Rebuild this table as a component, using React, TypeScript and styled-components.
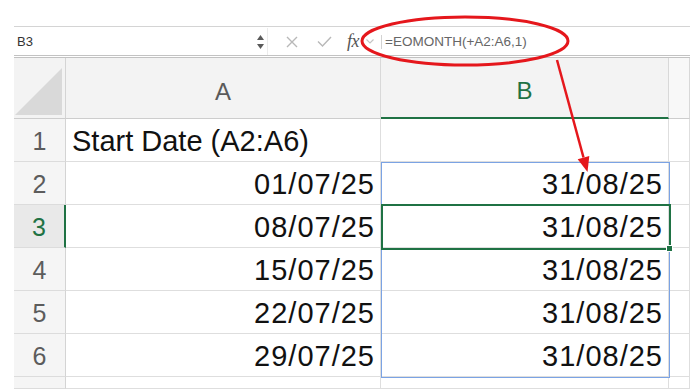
import styled, { createGlobalStyle, css } from "styled-components";

const GREEN = "#1f7244";
const GRID_LINE = "#dedede";

const GlobalStyle = createGlobalStyle`
  html, body {
    margin: 0;
    padding: 0;
    background: #fff;
  }
  body {
    font-family: "Liberation Sans", Arial, sans-serif;
  }
`;

type Placed = { $row: number; $col: number };

// every sheet part sits on an explicit track so the overlays never push cells around
const placed = css<Placed>`
  grid-row: ${(p) => p.$row};
  grid-column: ${(p) => p.$col};
`;

const Page = styled.div`
  position: relative;
  width: 690px;
  height: 389px;
  padding-top: 26px;
  box-sizing: border-box;
  overflow: hidden;
  display: flex;
  flex-direction: column;
`;

const FormulaBar = styled.div`
  margin-left: 14px;
  height: 32px;
  box-sizing: border-box;
  display: flex;
  align-items: center;
  padding-top: 1px;
  border-top: 1px solid #d4d4d4;
  border-bottom: 3px double #c2c2c2;
`;

const NameBox = styled.div`
  flex: 0 0 254px;
  height: 100%;
  box-sizing: border-box;
  display: flex;
  align-items: center;
  justify-content: space-between;
  padding: 0 3px 0 3px;
  border-right: 1px solid #ececec;
  font-size: 13px;
  color: #333;
`;

const Spinner = styled.div`
  display: flex;
  flex-direction: column;
  gap: 4px;
`;

const IconSlot = styled.div<{ $width?: number; $gap?: number }>`
  flex: 0 0 ${(p) => p.$width ?? 24}px;
  margin-left: ${(p) => p.$gap ?? 0}px;
  display: flex;
  align-items: center;
  justify-content: center;
`;

const FxLabel = styled.span`
  font-family: "Liberation Serif", "Times New Roman", serif;
  font-style: italic;
  font-size: 18px;
  color: #555;
  letter-spacing: -0.5px;
`;

const Divider = styled.div`
  flex: 0 0 1px;
  height: 14px;
  margin-left: 6px;
  background: #d2d2d2;
`;

const FormulaText = styled.div`
  margin-left: 3px;
  font-size: 13.5px;
  color: #666;
  white-space: nowrap;
`;

const Sheet = styled.div`
  flex: 1;
  margin-left: 14px;
  display: grid;
  grid-template-columns: 52px 315px 288px 1fr;
  grid-template-rows: 61px repeat(6, 43px) 1fr;
`;

const Corner = styled.div<Placed>`
  ${placed};
  position: relative;
  background: #f3f3f3;
  border-right: 1px solid #d4d4d4;
  border-bottom: 1px solid #cdcdcd;

  &::after {
    content: "";
    position: absolute;
    right: 3px;
    bottom: 3px;
    width: 47px;
    height: 47px;
    background: #d9d9d9;
    clip-path: polygon(100% 0, 100% 100%, 0 100%);
  }
`;

const ColumnHeader = styled.div<Placed & { $selected?: boolean; $blank?: boolean }>`
  ${placed};
  box-sizing: border-box;
  display: flex;
  align-items: center;
  justify-content: center;
  padding-top: 7px;
  background: ${(p) => (p.$blank ? "#f8f8f8" : "#f3f3f3")};
  border-right: 1px solid #d8d8d8;
  border-bottom: ${(p) =>
    p.$selected ? `2px solid ${GREEN}` : "1px solid #cdcdcd"};
  font-size: 24px;
  color: ${(p) => (p.$selected ? GREEN : "#5a5a5a")};
`;

const RowHeader = styled.div<Placed & { $active?: boolean }>`
  ${placed};
  box-sizing: border-box;
  display: flex;
  align-items: center;
  justify-content: center;
  padding-top: 2px;
  background: ${(p) => (p.$active ? "#e9e9e9" : "#f5f5f5")};
  border-right: ${(p) =>
    p.$active ? `2px solid ${GREEN}` : "1px solid #d4d4d4"};
  border-bottom: 1px solid #dcdcdc;
  font-size: 25px;
  color: ${(p) => (p.$active ? GREEN : "#5c5c5c")};
`;

const Cell = styled.div<Placed & { $numeric?: boolean }>`
  ${placed};
  box-sizing: border-box;
  display: flex;
  align-items: center;
  justify-content: ${(p) => (p.$numeric ? "flex-end" : "flex-start")};
  padding: 3px ${(p) => (p.$numeric ? 5 : 6)}px 0 6px;
  border-right: 1px solid ${GRID_LINE};
  border-bottom: 1px solid ${GRID_LINE};
  font-size: 29px;
  letter-spacing: ${(p) => (p.$numeric ? "1px" : "0")};
  color: #111;
  white-space: nowrap;
  overflow: hidden;
`;

const SelectedRange = styled.div`
  grid-column: 3;
  grid-row: 3 / 8;
  margin: 0 -1px -1px 0;
  border: 1px solid #7ba3e4;
  pointer-events: none;
  z-index: 1;
`;

const ActiveCell = styled.div`
  position: relative;
  grid-column: 3;
  grid-row: 4;
  margin: -1px -2px -2px 0;
  border: 2px solid ${GREEN};
  pointer-events: none;
  z-index: 2;

  &::after {
    content: "";
    position: absolute;
    right: -4px;
    bottom: -4px;
    width: 5px;
    height: 5px;
    background: ${GREEN};
    border: 1px solid #fff;
  }
`;

const Annotation = styled.svg`
  position: absolute;
  top: 0;
  left: 0;
  pointer-events: none;
  z-index: 5;
`;

const startDates = ["01/07/25", "08/07/25", "15/07/25", "22/07/25", "29/07/25"];
const endOfMonth = "31/08/25";

const Triangle = ({ up }: { up?: boolean }) => (
  <svg width="7" height="5" viewBox="0 0 7 5">
    <path d={up ? "M3.5 0 L7 5 L0 5 Z" : "M0 0 L7 0 L3.5 5 Z"} fill="#5a5a5a" />
  </svg>
);

const CancelIcon = () => (
  <svg width="12" height="12" viewBox="0 0 12 12">
    <path d="M1 1 L11 11 M11 1 L1 11" stroke="#b8b8b8" strokeWidth="1.4" />
  </svg>
);

const ConfirmIcon = () => (
  <svg width="15" height="11" viewBox="0 0 15 11">
    <path d="M1 5.5 L5.5 10 L14 1" stroke="#b8b8b8" strokeWidth="1.4" fill="none" />
  </svg>
);

const Chevron = () => (
  <svg width="8" height="5" viewBox="0 0 8 5">
    <path d="M0.5 0.5 L4 4 L7.5 0.5" stroke="#c4c4c4" strokeWidth="1.2" fill="none" />
  </svg>
);

export default function App() {
  const activeRow = 3;

  return (
    <>
      <GlobalStyle />
      <Page>
        <FormulaBar>
          <NameBox>
            <span>B3</span>
            <Spinner>
              <Triangle up />
              <Triangle />
            </Spinner>
          </NameBox>
          <IconSlot $gap={12}>
            <CancelIcon />
          </IconSlot>
          <IconSlot $gap={8}>
            <ConfirmIcon />
          </IconSlot>
          <IconSlot $gap={5}>
            <FxLabel>fx</FxLabel>
          </IconSlot>
          <IconSlot $width={10}>
            <Chevron />
          </IconSlot>
          <Divider />
          <FormulaText>=EOMONTH(+A2:A6,1)</FormulaText>
        </FormulaBar>

        <Sheet>
          <Corner $row={1} $col={1} />
          <ColumnHeader $row={1} $col={2}>
            A
          </ColumnHeader>
          <ColumnHeader $row={1} $col={3} $selected>
            B
          </ColumnHeader>
          <ColumnHeader $row={1} $col={4} $blank />

          <RowHeader $row={2} $col={1}>
            1
          </RowHeader>
          <Cell $row={2} $col={2}>
            Start Date (A2:A6)
          </Cell>
          <Cell $row={2} $col={3} />
          <Cell $row={2} $col={4} />

          {startDates.map((date, i) => {
            const row = i + 2;
            const track = row + 1;
            return [
              <RowHeader
                key={`h${row}`}
                $row={track}
                $col={1}
                $active={row === activeRow}
              >
                {row}
              </RowHeader>,
              <Cell key={`a${row}`} $row={track} $col={2} $numeric>
                {date}
              </Cell>,
              <Cell key={`b${row}`} $row={track} $col={3} $numeric>
                {endOfMonth}
              </Cell>,
              <Cell key={`c${row}`} $row={track} $col={4} />,
            ];
          })}

          <RowHeader $row={8} $col={1} />
          <Cell $row={8} $col={2} />
          <Cell $row={8} $col={3} />
          <Cell $row={8} $col={4} />

          <SelectedRange />
          <ActiveCell />
        </Sheet>

        <Annotation width="690" height="389" viewBox="0 0 690 389">
          <ellipse
            cx="465"
            cy="41"
            rx="103"
            ry="24"
            fill="none"
            stroke="#e5171c"
            strokeWidth="3"
          />
          <line
            x1="557"
            y1="60"
            x2="583.5"
            y2="157.5"
            stroke="#e5171c"
            strokeWidth="2.5"
          />
          <polygon points="587.5,172 589.3,156 577.7,159.2" fill="#e5171c" />
        </Annotation>
      </Page>
    </>
  );
}
